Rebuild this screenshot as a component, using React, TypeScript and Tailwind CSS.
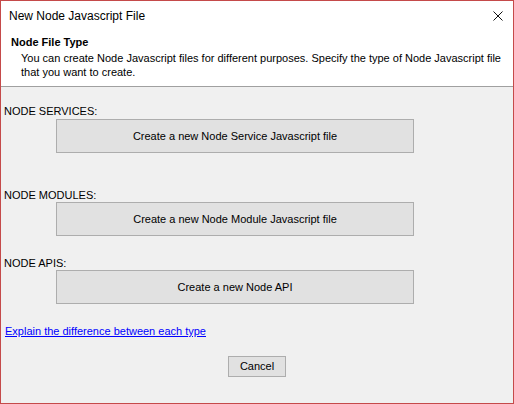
const font = "font-['Liberation_Sans',Arial,sans-serif]";

function WideButton({ label }: { label: string }) {
  return (
    <button className="ml-[55px] w-[358px] h-[34px] border border-[#adadad] bg-[#e1e1e1] text-[11px] text-black">
      {label}
    </button>
  );
}

export default function App() {
  return (
    <div className={`${font} w-[514px] h-[404px] border border-[#c54a4a] bg-[#f0f0f0] flex flex-col text-black`}>
      {/* title bar */}
      <div className="h-[30px] bg-white flex items-center justify-between pl-[8px] pr-[10px]">
        <span className="text-[12px] text-[#000]">New Node Javascript File</span>
        <svg width="10" height="10" viewBox="0 0 10 10">
          <path d="M0.5 0.5 L9.5 9.5 M9.5 0.5 L0.5 9.5" stroke="#111" strokeWidth="1" />
        </svg>
      </div>

      {/* header */}
      <div className="h-[56px] bg-white border-b border-[#a0a0a0] pl-[10px] pt-[5px]">
        <div className="text-[11px] font-bold leading-[13px]">Node File Type</div>
        <div className="pl-[10px] pt-[2px] text-[11px] leading-[14px]">
          You can create Node Javascript files for different purposes. Specify the type of Node Javascript file
          <br />
          that you want to create.
        </div>
      </div>

      {/* body */}
      <div className="flex flex-col text-[11px]">
        <div className="mt-[18px] ml-[3px] leading-[13px]">NODE SERVICES:</div>
        <div className="mt-[1px]">
          <WideButton label="Create a new Node Service Javascript file" />
        </div>
        <div className="mt-[36px] ml-[3px] leading-[13px]">NODE MODULES:</div>
        <div>
          <WideButton label="Create a new Node Module Javascript file" />
        </div>
        <div className="mt-[21px] ml-[3px] leading-[13px]">NODE APIS:</div>
        <div>
          <WideButton label="Create a new Node API" />
        </div>
        <div className="mt-[21px] ml-[4px] leading-[13px]">
          <a href="#" className="text-[#0000ff] underline">
            Explain the difference between each type
          </a>
        </div>
        <div className="mt-[18px] flex">
          <button className="ml-[227px] w-[58px] h-[21px] border border-[#adadad] bg-[#e1e1e1] text-[11px]">
            Cancel
          </button>
        </div>
      </div>
    </div>
  );
}
